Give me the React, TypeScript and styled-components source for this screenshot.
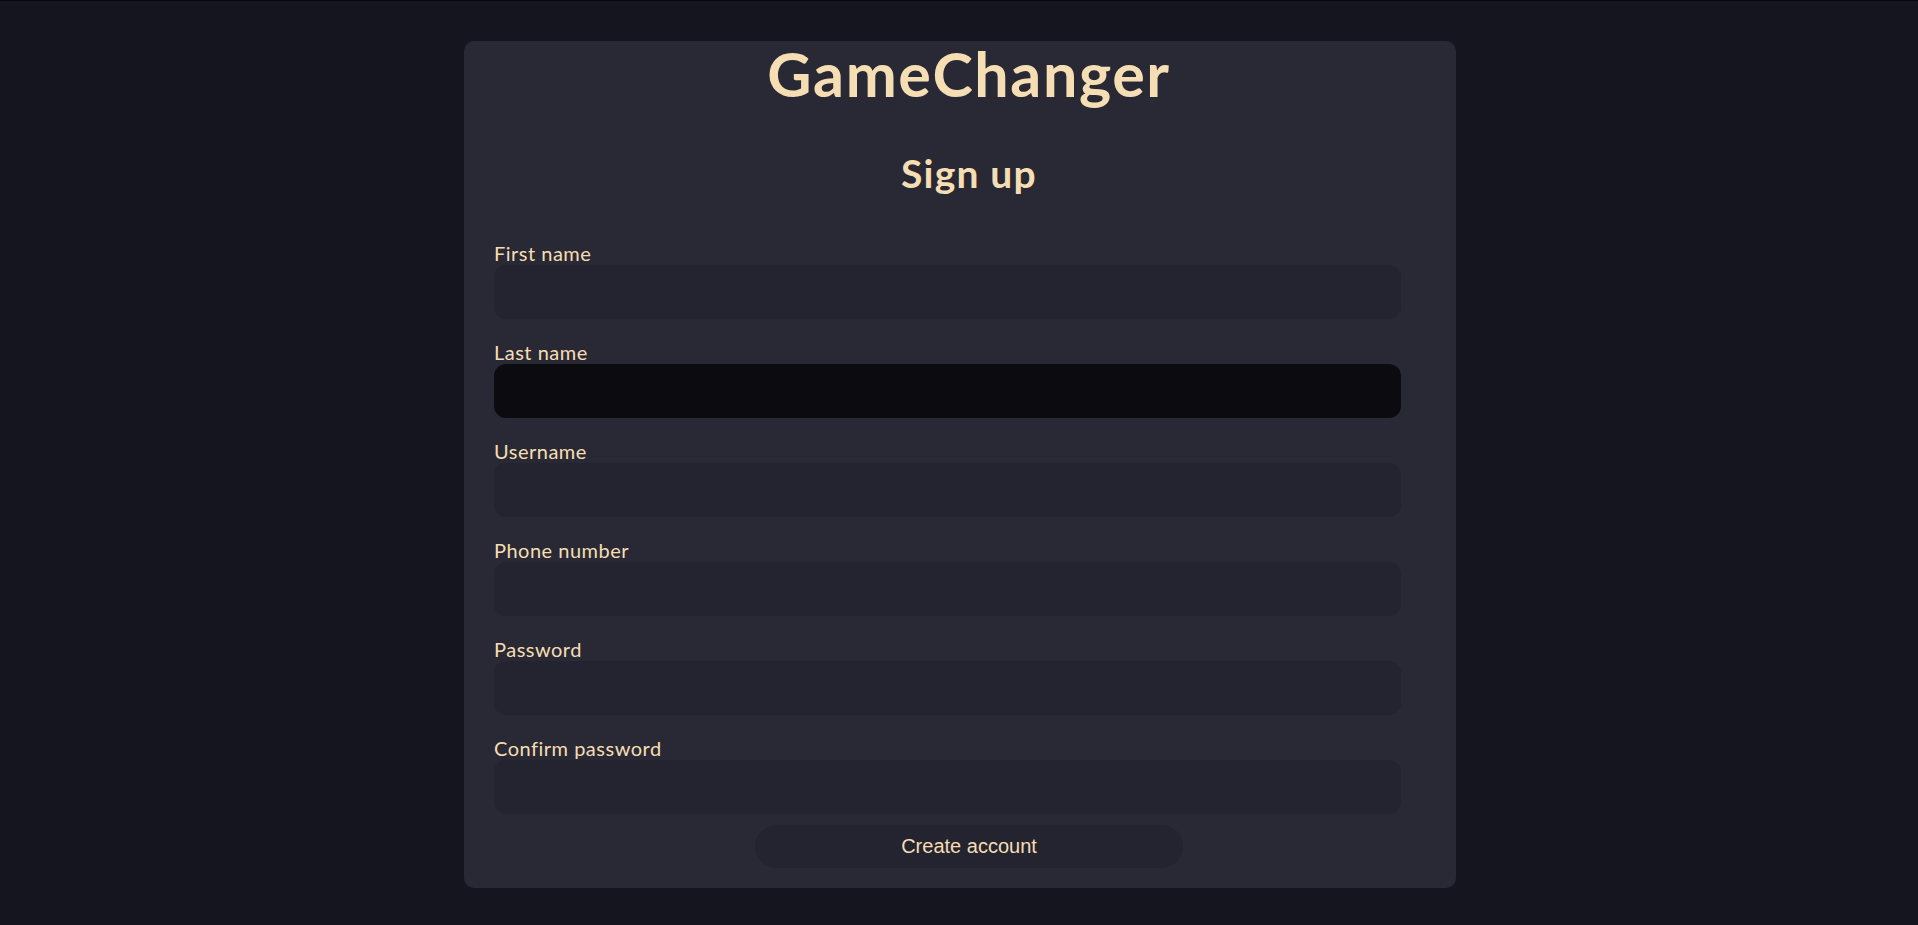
import React from "react";
import styled, { createGlobalStyle } from "styled-components";

const Global = createGlobalStyle`
  html, body {
    margin: 0;
    padding: 0;
    background: #15151f;
  }
  * { box-sizing: border-box; }
`;

const Page = styled.div`
  min-height: 100vh;
  background: #15151f;
  border-top: 1px solid #08080b;
  padding-top: 40px;
  font-family: Lato, "Liberation Sans", sans-serif;
`;

const Card = styled.form`
  width: 992px;
  margin: 0 0 0 464px;
  background: #292935;
  border-radius: 10px;
  padding: 0 12px 20px 30px;
  display: flex;
  flex-direction: column;
`;

const Title = styled.h1`
  margin: 0;
  text-align: center;
  color: #f5deb3;
  font-size: 61px;
  line-height: 66px;
  font-weight: 700;
  letter-spacing: 1.6px;
`;

const Subtitle = styled.h2`
  margin: 42px 0 44px;
  text-align: center;
  color: #f5deb3;
  font-size: 39px;
  line-height: 48px;
  font-weight: 700;
  letter-spacing: 1.2px;
`;

const Fields = styled.div`
  display: flex;
  flex-direction: column;
  gap: 21px;
`;

const Field = styled.label`
  display: flex;
  flex-direction: column;
`;

const LabelText = styled.span`
  color: #f5deb3;
  font-size: 20px;
  line-height: 24px;
  font-weight: 400;
  letter-spacing: 0.5px;
`;

const Input = styled.input<{ $active?: boolean }>`
  width: 907px;
  height: 54px;
  border: none;
  outline: none;
  border-radius: 12px;
  background: ${(p) => (p.$active ? "#0c0b10" : "#242430")};
  color: #f5deb3;
  font-size: 18px;
  padding: 0 16px;
  font-family: inherit;
`;

const Submit = styled.button`
  align-self: center;
  margin-top: 11px;
  width: 428px;
  height: 43px;
  border: none;
  border-radius: 22px;
  background: #242430;
  color: #f5deb3;
  font-family: "Liberation Sans", Arial, sans-serif;
  font-size: 20px;
  cursor: pointer;
`;

const fields = [
  { label: "First name", type: "text" },
  { label: "Last name", type: "text", active: true },
  { label: "Username", type: "text" },
  { label: "Phone number", type: "tel" },
  { label: "Password", type: "password" },
  { label: "Confirm password", type: "password" },
];

export default function App() {
  return (
    <>
      <Global />
      <Page>
        <Card onSubmit={(e) => e.preventDefault()}>
          <Title>GameChanger</Title>
          <Subtitle>Sign up</Subtitle>
          <Fields>
            {fields.map((f) => (
              <Field key={f.label}>
                <LabelText>{f.label}</LabelText>
                <Input type={f.type} $active={f.active} />
              </Field>
            ))}
          </Fields>
          <Submit type="submit">Create account</Submit>
        </Card>
      </Page>
    </>
  );
}
